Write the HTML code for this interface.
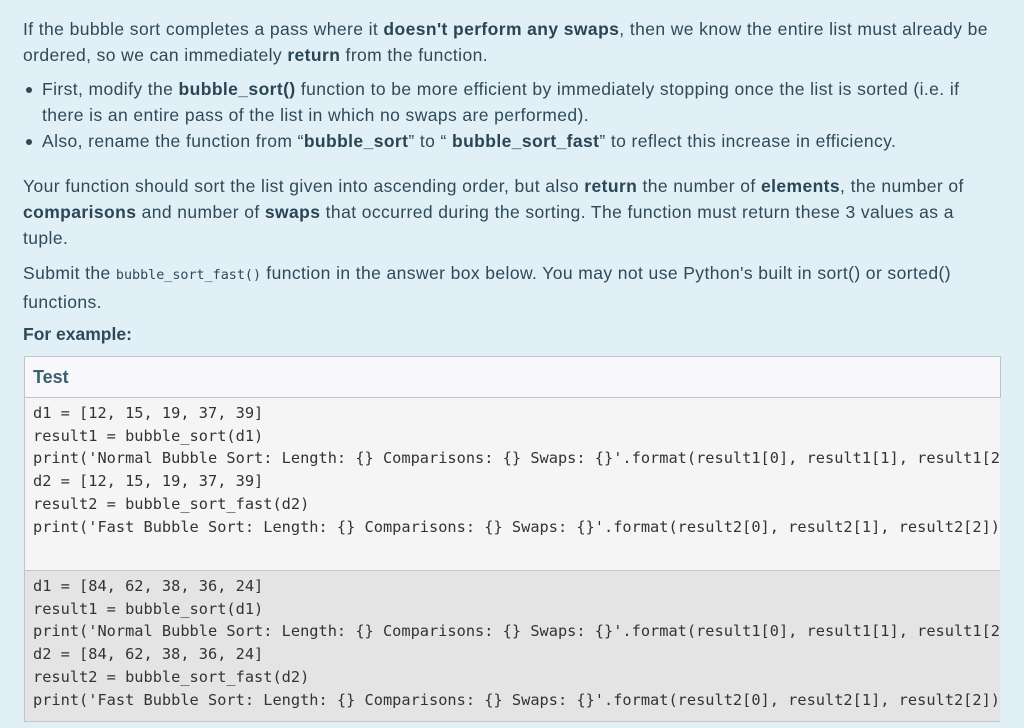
<!DOCTYPE html>
<html><head><style>
body{margin:0;width:1024px;height:728px;overflow:hidden;background:#e1eff7;font-family:"Liberation Sans",sans-serif;color:#2e4a59;font-size:17.5px;letter-spacing:0.4px}
.p{position:absolute;left:23px;white-space:nowrap;line-height:26px;}
b{color:#2a4655}
ul{margin:0;padding:0;list-style:none}
.bul{position:absolute;left:23px;line-height:26px;white-space:nowrap}
.bul li{position:relative;padding-left:19px}
.bul li:before{content:"";position:absolute;left:3px;top:11px;width:6px;height:6px;border-radius:3px;background:#2e4a59}
code{font-family:"DejaVu Sans Mono",monospace;font-size:13.4px;color:#2e4a59;letter-spacing:0}
table{position:absolute;left:24px;top:356px;width:976px;border-collapse:collapse;letter-spacing:0}
th{background:#f8f8fc;border:1px solid #c4c4c4;text-align:left;height:40px;padding:0 8px;font-size:18px;color:#3a6070;}
td{font-family:"DejaVu Sans Mono",monospace;font-size:15.3px;line-height:22.7px;border:1px solid #c4c4c4;border-right:none;padding:4px 0 0 8px;white-space:pre;vertical-align:top;overflow:hidden;max-width:967px}
tr.r1 td{background:#f5f5f5;height:168px;color:#333}
tr.r2 td{background:#e4e4e4;height:146px;color:#333}
</style></head><body>
<div class="p" style="top:16px">If the bubble sort completes a pass where it <b>doesn't perform any swaps</b>, then we know the entire list must already be<br>ordered, so we can immediately <b>return</b> from the function.</div>
<ul class="bul" style="top:76px">
<li>First, modify the <b>bubble_sort()</b> function to be more efficient by immediately stopping once the list is sorted (i.e. if<br>there is an entire pass of the list in which no swaps are performed).</li>
<li>Also, rename the function from “<b>bubble_sort</b>” to “ <b>bubble_sort_fast</b>” to reflect this increase in efficiency.</li>
</ul>
<div class="p" style="top:173px">Your function should sort the list given into ascending order, but also <b>return</b> the number of <b>elements</b>, the number of<br><b>comparisons</b> and number of <b>swaps</b> that occurred during the sorting. The function must return these 3 values as a<br>tuple.</div>
<div class="p" style="top:260px">Submit the <code>bubble_sort_fast()</code> function in the answer box below. You may not use Python's built in sort() or sorted()<br>functions.</div>
<div class="p" style="top:321px;font-weight:bold;font-size:17.5px;letter-spacing:0">For example:</div>
<table>
<tr><th>Test</th></tr>
<tr class="r1"><td><div style="width:967px;overflow:hidden">d1 = [12, 15, 19, 37, 39]
result1 = bubble_sort(d1)
print('Normal Bubble Sort: Length: {} Comparisons: {} Swaps: {}'.format(result1[0], result1[1], result1[2]))
d2 = [12, 15, 19, 37, 39]
result2 = bubble_sort_fast(d2)
print('Fast Bubble Sort: Length: {} Comparisons: {} Swaps: {}'.format(result2[0], result2[1], result2[2]))</div></td></tr>
<tr class="r2"><td><div style="width:967px;overflow:hidden">d1 = [84, 62, 38, 36, 24]
result1 = bubble_sort(d1)
print('Normal Bubble Sort: Length: {} Comparisons: {} Swaps: {}'.format(result1[0], result1[1], result1[2]))
d2 = [84, 62, 38, 36, 24]
result2 = bubble_sort_fast(d2)
print('Fast Bubble Sort: Length: {} Comparisons: {} Swaps: {}'.format(result2[0], result2[1], result2[2]))</div></td></tr>
</table>
</body></html>
